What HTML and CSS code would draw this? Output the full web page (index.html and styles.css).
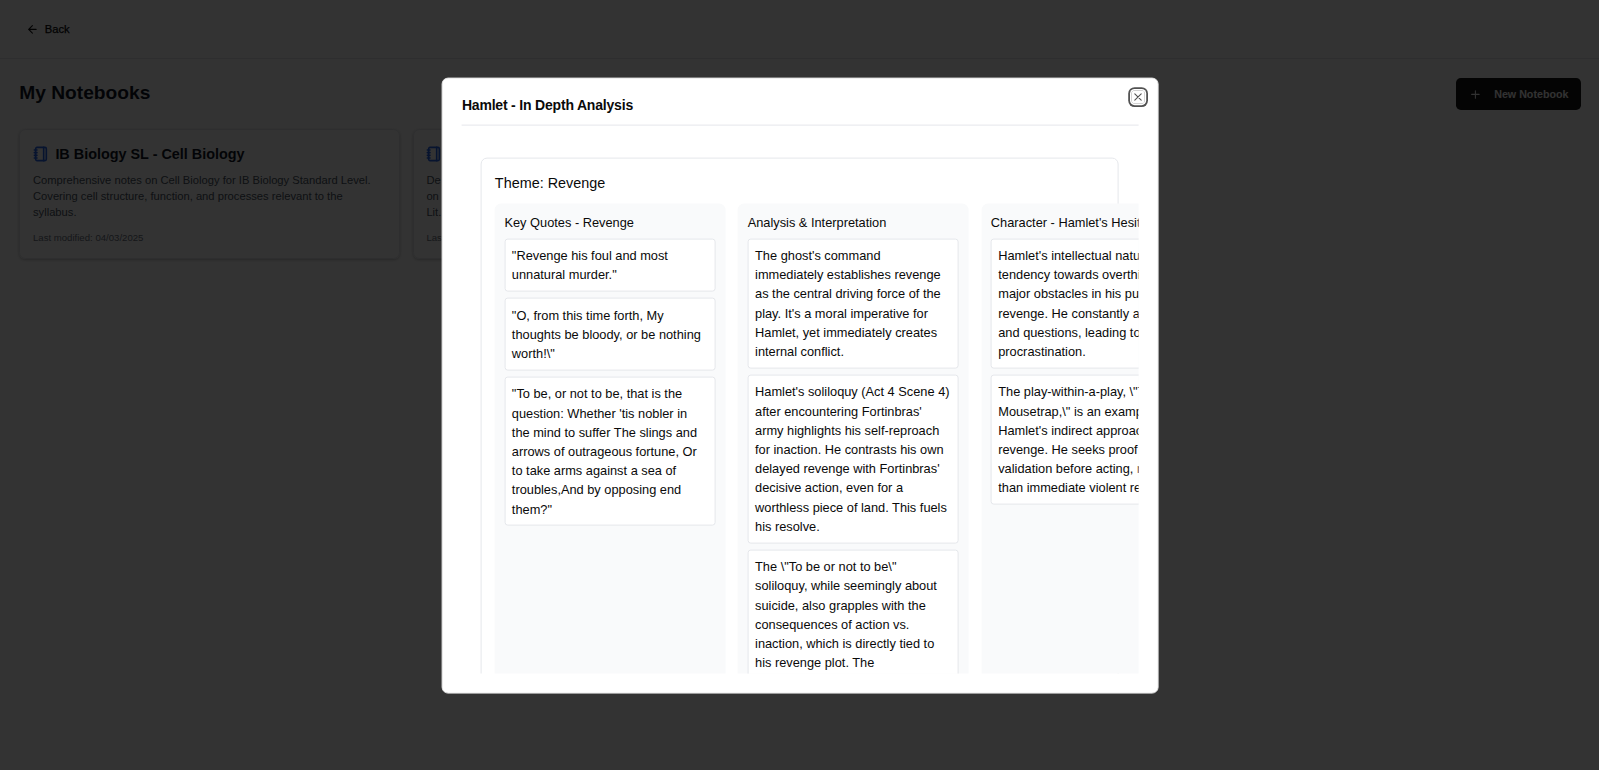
FILE: index.html
```html
<!DOCTYPE html>
<html lang="en">
<head>
<meta charset="utf-8">
<title>My Notebooks</title>
<link rel="stylesheet" href="styles.css">
</head>
<body>
<header class="topbar">
  <button class="back"><svg class="icon-arrow" viewBox="0 0 24 24"><path d="m12 19-7-7 7-7M19 12H5"/></svg><span>Back</span></button>
</header>
<main class="page">
  <div class="page-head">
    <h1>My Notebooks</h1>
    <button class="new-btn"><svg viewBox="0 0 24 24"><path d="M5 12h14M12 5v14"/></svg><span>New Notebook</span></button>
  </div>
  <div class="grid">
    <article class="nb">
      <h2><svg viewBox="0 0 24 24"><path d="M2 6h4M2 10h4M2 14h4M2 18h4M16 2v20"/><rect width="16" height="20" x="4" y="2" rx="2"/></svg><span>IB Biology SL - Cell Biology</span></h2>
      <p class="desc">Comprehensive notes on Cell Biology for IB Biology Standard Level.<br>Covering cell structure, function, and processes relevant to the<br>syllabus.</p>
      <p class="date">Last modified: 04/03/2025</p>
    </article>
    <article class="nb">
      <h2><svg viewBox="0 0 24 24"><path d="M2 6h4M2 10h4M2 14h4M2 18h4M16 2v20"/><rect width="16" height="20" x="4" y="2" rx="2"/></svg></h2>
      <p class="desc">De<br>on<br>Lit.</p>
      <p class="date">Last</p>
    </article>
  </div>
</main>
<div class="overlay">
  <section class="modal">
    <button class="close"><svg viewBox="0 0 24 24"><path d="M18 6 6 18M6 6l12 12"/></svg></button>
    <div class="modal-head">Hamlet - In Depth Analysis</div>
    <div class="scroll">
      <div class="theme">
        <h3>Theme: Revenge</h3>
        <div class="cols">
          <div class="col">
            <h4>Key Quotes - Revenge</h4>
            <div class="note">"Revenge his foul and most<br>unnatural murder."</div>
            <div class="note">"O, from this time forth, My<br>thoughts be bloody, or be nothing<br>worth!\"</div>
            <div class="note">"To be, or not to be, that is the<br>question: Whether 'tis nobler in<br>the mind to suffer The slings and<br>arrows of outrageous fortune, Or<br>to take arms against a sea of<br>troubles,And by opposing end<br>them?"</div>
          </div>
          <div class="col">
            <h4>Analysis &amp; Interpretation</h4>
            <div class="note">The ghost's command<br>immediately establishes revenge<br>as the central driving force of the<br>play. It's a moral imperative for<br>Hamlet, yet immediately creates<br>internal conflict.</div>
            <div class="note">Hamlet's soliloquy (Act 4 Scene 4)<br>after encountering Fortinbras'<br>army highlights his self-reproach<br>for inaction. He contrasts his own<br>delayed revenge with Fortinbras'<br>decisive action, even for a<br>worthless piece of land. This fuels<br>his resolve.</div>
            <div class="note">The \"To be or not to be\"<br>soliloquy, while seemingly about<br>suicide, also grapples with the<br>consequences of action vs.<br>inaction, which is directly tied to<br>his revenge plot. The</div>
          </div>
          <div class="col">
            <h4>Character - Hamlet's Hesitation</h4>
            <div class="note">Hamlet's intellectual nature and<br>tendency towards overthinking<br>major obstacles in his pursuit of<br>revenge. He constantly analyzes<br>and questions, leading to<br>procrastination.</div>
            <div class="note">The play-within-a-play, \"The<br>Mousetrap,\" is an example of<br>Hamlet's indirect approach to<br>revenge. He seeks proof and<br>validation before acting, rather<br>than immediate violent revenge.</div>
          </div>
        </div>
      </div>
    </div>
  </section>
</div>
</body>
</html>
```

FILE: styles.css
```css
* { box-sizing: border-box; margin: 0; padding: 0; }
html, body { height: 100%; overflow: hidden; }
body { font-family: "Liberation Sans", Arial, sans-serif; background: #fff; color: #0a0a0a; }
button { font: inherit; border: 0; background: none; color: inherit; }
svg { fill: none; stroke: currentColor; stroke-width: 2; stroke-linecap: round; stroke-linejoin: round; display: block; flex: none; }
h1, h2, h3, h4 { font-weight: 400; }

.topbar { height: 59px; border-bottom: 1px solid #e5e7eb; padding: 0 25.6px; display: flex; align-items: center; }
.back { display: flex; align-items: center; gap: 6.4px; font-size: 11.2px; -webkit-text-stroke: .25px currentColor; }
.back svg { width: 12.8px; height: 12.8px; }
.page { padding: 19.2px 18.2px 19.2px 19.2px; }
.page-head { display: flex; justify-content: space-between; align-items: center; height: 32px; }
.page-head h1 { font-size: 19.2px; line-height: 22px; padding-bottom: 2px; font-weight: 700; color: #111827; }
.new-btn { display: flex; align-items: center; width: 125px; height: 32px; padding-left: 12.8px; gap: 12.8px; border-radius: 4.8px; background: #171717; color: #fafafa; font-size: 10.7px; font-weight: 700; }
.new-btn svg { width: 12.8px; height: 12.8px; }
.grid { display: grid; grid-template-columns: repeat(4, 380.6px); gap: 12.8px; margin-top: 19.2px; }
.nb { height: 130px; border: 1px solid #e5e7eb; border-radius: 6.4px; padding: 12.8px; box-shadow: 0 1px 3px rgba(0,0,0,.25); }
.nb h2 { display: flex; align-items: center; gap: 6.4px; height: 22.4px; font-size: 14.4px; font-weight: 700; color: #111827; }
.nb svg { width: 16px; height: 16px; color: #2563eb; stroke-width: 2.4; }
.desc { margin-top: 6.4px; font-size: 11.2px; line-height: 16px; color: #4b5563; white-space: nowrap; }
.date { margin-top: 12.4px; font-size: 9.6px; line-height: 12.8px; color: #6b7280; }

.overlay { position: fixed; inset: 0; background: rgba(0,0,0,.8); display: flex; align-items: center; justify-content: center; }
.modal { position: relative; transform: translate(.6px, .6px); width: 716.8px; height: 616px; background: #fff; border: 1px solid #e5e5e5; border-radius: 6.4px; padding: 19.2px; display: flex; flex-direction: column; }
.close { position: absolute; top: 12px; right: 12.8px; opacity: .7; border-radius: 3px; box-shadow: 0 0 0 1.6px #fff, 0 0 0 3.4px #0a0a0a; }
.close svg { width: 12.8px; height: 12.8px; }
.modal-head { flex: none; height: 28px; border-bottom: 1px solid #e5e7eb; font-size: 14px; letter-spacing: -.19px; line-height: 14.4px; font-weight: 700; }
.scroll { flex: 1; min-height: 0; overflow: hidden; padding: 32px 20px 0 19.2px; }
.theme { height: 900px; border: 1px solid #e5e7eb; border-radius: 6.4px; padding: 12.8px; }
.theme h3 { font-size: 14.4px; line-height: 23px; margin-bottom: 9.4px; }
.cols { display: flex; gap: 12.8px; height: 800px; }
.col { flex: none; width: 230.4px; padding: 8.6px 9.6px; border-radius: 6.4px; background: #f9fafb; }
.col h4 { font-size: 12.8px; line-height: 19.2px; margin-bottom: 6.6px; white-space: nowrap; }
.note { margin-bottom: 6.4px; padding: 6.2px 6.4px 6.6px; border: 1px solid #e5e7eb; border-radius: 3.2px; background: #fff; font-size: 12.8px; line-height: 19.2px; white-space: nowrap; }
```
